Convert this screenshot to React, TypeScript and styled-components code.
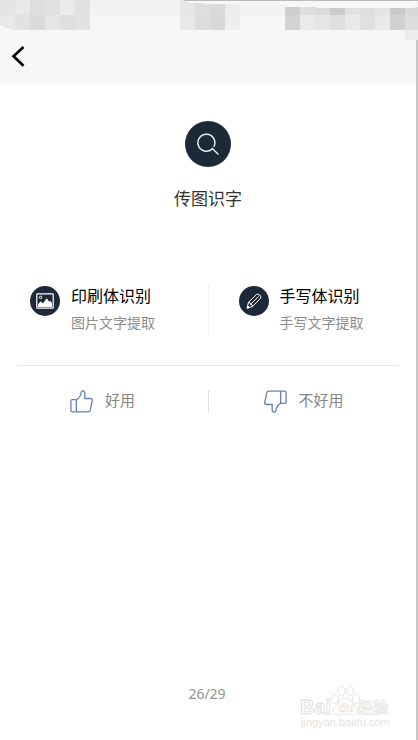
import React from "react";
import styled, { createGlobalStyle } from "styled-components";

const GlobalStyle = createGlobalStyle`
  *, *::before, *::after { box-sizing: border-box; }
  body {
    margin: 0;
    background: #fff;
    font-family: "Noto Sans CJK SC", "Noto Sans", sans-serif;
  }
`;

const PlainButton = styled.button`
  display: flex;
  margin: 0;
  padding: 0;
  border: 0;
  background: none;
  font-family: inherit;
  text-align: left;
  cursor: pointer;
`;

const Page = styled.div`
  min-height: 100vh;
  display: flex;
  flex-direction: column;
  background: #fff;
  border-right: 2px solid #c6c6c6;
`;

const Header = styled.header`
  height: 84px;
  background: #f7f7f7;
`;

const StatusBar = styled.div`
  display: flex;
  justify-content: space-between;
  height: 40px;
  margin-right: -2px;
  background: linear-gradient(#f2f2f2 15px, #f7f7f7 15px);
  svg { display: block; flex: none; }
`;

const BackButton = styled(PlainButton)`
  padding: 4px 10px;
`;

const Main = styled.main`
  flex: 1;
  padding: 37px 18px 0;
`;

const Hero = styled.section`
  display: flex;
  flex-direction: column;
  align-items: center;
`;

const Disc = styled.span<{ $size: number }>`
  flex: none;
  display: flex;
  align-items: center;
  justify-content: center;
  width: ${(p) => p.$size}px;
  height: ${(p) => p.$size}px;
  border-radius: 50%;
  background: #1d2938;
`;

const Title = styled.h1`
  margin: 18px 0 0;
  font-size: 17px;
  line-height: 26px;
  font-weight: 400;
  color: #333;
`;

const Split = styled.div<{ $line: string }>`
  display: grid;
  grid-template-columns: 1fr 1px 1fr;
  &::before {
    content: "";
    grid-column: 2;
    grid-row: 1;
    background: ${(p) => p.$line};
  }
  & > :first-child { grid-column: 1; grid-row: 1; }
  & > :last-child { grid-column: 3; grid-row: 1; }
`;

const Features = styled(Split)`
  height: 52px;
  margin-top: 73px;
`;

const Feature = styled(PlainButton)<{ $indent: number }>`
  align-items: flex-start;
  gap: 11px;
  padding-left: ${(p) => p.$indent}px;
  ${Disc} { margin-top: 2px; }
`;

const FeatureText = styled.span`
  display: flex;
  flex-direction: column;
  gap: 6px;
`;

const FeatureName = styled.span`
  font-size: 16px;
  line-height: 22px;
  color: #000;
`;

const FeatureNote = styled.span`
  font-size: 14px;
  line-height: 20px;
  color: #8c8c8c;
`;

const Rule = styled.hr`
  height: 1px;
  margin: 29px 0 24px;
  border: 0;
  background: #e6e6e6;
`;

const Votes = styled(Split)`
  height: 22px;
`;

const Vote = styled(PlainButton)<{ $indent: number }>`
  align-items: flex-start;
  gap: 12px;
  padding-left: ${(p) => p.$indent}px;
  font-size: 15px;
  line-height: 20px;
  color: #858585;
`;

const Footer = styled.footer`
  display: grid;
  grid-template-columns: 1fr auto 1fr;
  align-items: start;
  padding: 0 26px 8px 24px;
`;

const PageNumber = styled.p`
  grid-column: 2;
  margin: 0;
  font-family: "Noto Sans", sans-serif;
  font-size: 14px;
  line-height: 20px;
  color: #939393;
`;

const Watermark = styled.svg`
  justify-self: end;
  display: block;
  overflow: visible;
  font-family: "Liberation Sans", "Noto Sans CJK SC", sans-serif;
  font-weight: 700;
`;

type Cell = [number, number, number, number, string];

const row = (x: number, y: number, h: number, colors: string[]): Cell[] =>
  colors.map((c, i) => [x + i * 15, y, 15, h, c]);

const leftCells: Cell[] = [
  ...row(0, 0, 15, ["#e4e4e4", "#e8e8e8", "#dedede", "#e0e0e0", "#ebebeb", "#e1e1e1"]),
  ...row(0, 15, 15, ["#e8e8e8", "#e2e2e2", "#dadada", "#e5e5e5", "#dfdfdf", "#e2e2e2"]),
];

const rightCells: Cell[] = [
  ...row(0, 0, 15, ["#e6e6e6", "#dedede", "#dadada", "#ececec"]),
  ...row(0, 15, 15, ["#e8e8e8", "#dcdcdc", "#d8d8d8", "#eeeeee"]),
  ...row(105, 7, 8, ["#cecece", "#dedede", "#dadada", "#cbcbcb", "#e2e2e2", "#dddddd", "#e4e4e4", "#c9c9c9", "#d8d8d8"]),
  ...row(105, 15, 15, ["#d3d3d3", "#eaeaea", "#e5e5e5", "#dfdfdf", "#e9e9e9", "#e0e0e0", "#e9e9e9", "#d0d0d0", "#dcdcdc"]),
  [225, 30, 13, 10, "#ececec"],
];

const Mosaic = ({ width, cells, children }: { width: number; cells: Cell[]; children?: React.ReactNode }) => (
  <svg width={width} height="40" shapeRendering="crispEdges" aria-hidden="true">
    {cells.map(([x, y, w, h, fill]) => (
      <rect key={`${x}-${y}`} x={x} y={y} width={w} height={h} fill={fill} />
    ))}
    {children}
  </svg>
);

const SearchIcon = () => (
  <svg width="24" height="24" viewBox="0 0 24 24" fill="none" stroke="#e9edf0" strokeWidth="1.5" strokeLinecap="round">
    <path d="M16 17.1A8.5 8.5 0 1 1 18.1 14.3" />
    <path d="M16.3 16.5 22 22" />
  </svg>
);

const PictureIcon = () => (
  <svg width="18" height="16" viewBox="0 0 18 16">
    <rect x=".8" y=".8" width="16.4" height="14.4" rx=".6" fill="none" stroke="#fff" strokeWidth="1.2" />
    <circle cx="4.6" cy="4.4" r="1.2" fill="none" stroke="#fff" strokeWidth="1" />
    <path d="M2 14V11.2L4.8 8.3 6.8 10.5 10.8 5.3 13.2 8.8 14.3 7.8 16 10.5V14Z" fill="#fff" />
  </svg>
);

const PencilIcon = () => (
  <svg width="16" height="16" viewBox="0 0 16 16" fill="none" stroke="#fff" strokeWidth="1" strokeLinejoin="round" strokeLinecap="round">
    <path d="M1.2 14.8 2.4 9.4 10.4 1.6Q12 .3 13.8 2T14.5 5.4L6.6 13.3Z" />
    <path d="M2.4 9.4Q4.8 9.2 4.5 11.4 6.8 11.2 6.6 13.3M4.8 11 12.3 3.9" />
    <path d="M1.2 14.8 1.7 12.7 3.3 14.2Z" fill="#fff" />
  </svg>
);

const ThumbIcon = ({ down = false }: { down?: boolean }) => (
  <svg width="23" height="23" viewBox="0 0 23 23" fill="none" stroke="#6581b5" strokeWidth="1.3" strokeLinejoin="round">
    <g transform={down ? "rotate(180 11.5 11.5)" : undefined}>
      <path d="M6.3 9.6H2.2Q.9 9.6.9 11V20.4Q.9 21.8 2.4 21.8H18.2Q19.8 21.8 20.2 20.4L22.2 10.6Q22.5 8.5 20.5 8.5H14.8V3.1Q14.8.8 12.9.8 11.3.8 11.1 2.5 10.4 7.9 6.3 9.6Z" />
      <path d="M6.3 9.6V21.8" />
    </g>
  </svg>
);

export default function App() {
  return (
    <>
      <GlobalStyle />
      <Page>
        <Header>
          <StatusBar>
            <Mosaic width={90} cells={leftCells}>
              <path d="M0 25 12 30H0Z" fill="#f7f7f7" />
            </Mosaic>
            <Mosaic width={238} cells={rightCells}>
              <path d="M4 1H236V7L234 8H136V7H118L104 5H61L50 4H24V3H10L4 1Z" fill="#f7f7f7" />
              <rect x="4" y="0" width="234" height="1" fill="#bababa" />
            </Mosaic>
          </StatusBar>
          <BackButton aria-label="返回">
            <svg width="16" height="24" viewBox="0 0 16 24" fill="none" stroke="#000" strokeWidth="2.6">
              <path d="M13.5 3 3.5 12.2 13.5 21.8" />
            </svg>
          </BackButton>
        </Header>

        <Main>
          <Hero>
            <Disc $size={46}><SearchIcon /></Disc>
            <Title>传图识字</Title>
          </Hero>

          <Features $line="#f2f2f2">
            <Feature $indent={12}>
              <Disc $size={30}><PictureIcon /></Disc>
              <FeatureText>
                <FeatureName>印刷体识别</FeatureName>
                <FeatureNote>图片文字提取</FeatureNote>
              </FeatureText>
            </Feature>
            <Feature $indent={30}>
              <Disc $size={30}><PencilIcon /></Disc>
              <FeatureText>
                <FeatureName>手写体识别</FeatureName>
                <FeatureNote>手写文字提取</FeatureNote>
              </FeatureText>
            </Feature>
          </Features>

          <Rule />

          <Votes $line="#dedede">
            <Vote $indent={52}><ThumbIcon />好用</Vote>
            <Vote $indent={55}><ThumbIcon down />不好用</Vote>
          </Votes>
        </Main>

        <Footer>
          <PageNumber>26/29</PageNumber>
          <Watermark width="90" height="48" viewBox="0 0 90 48" fill="#fff" stroke="#dcdcdc" strokeWidth="0.8">
            <text x="0" y="30" fontSize="20">Bai</text>
            <ellipse cx="35" cy="15" rx="3.6" ry="4.6" />
            <ellipse cx="41.5" cy="7" rx="3.6" ry="4.8" />
            <ellipse cx="50" cy="7" rx="3.6" ry="4.8" />
            <ellipse cx="56" cy="15" rx="3.6" ry="4.6" />
            <path d="M45 14C40 14 39 19 36 22 31 26 33 32 39 31Q45 29 51 31C58 32 60 26 55 22 52 19 51 14 45 14Z" />
            <text x="38" y="28" fontSize="13" strokeWidth="0.6">du</text>
            <text x="58" y="29" fontSize="15" strokeWidth="0.6">经验</text>
            <text x="1" y="42" fontSize="11" fontWeight="400" fill="#e4e4e4" stroke="none">jingyan.baidu.com</text>
          </Watermark>
        </Footer>
      </Page>
    </>
  );
}
